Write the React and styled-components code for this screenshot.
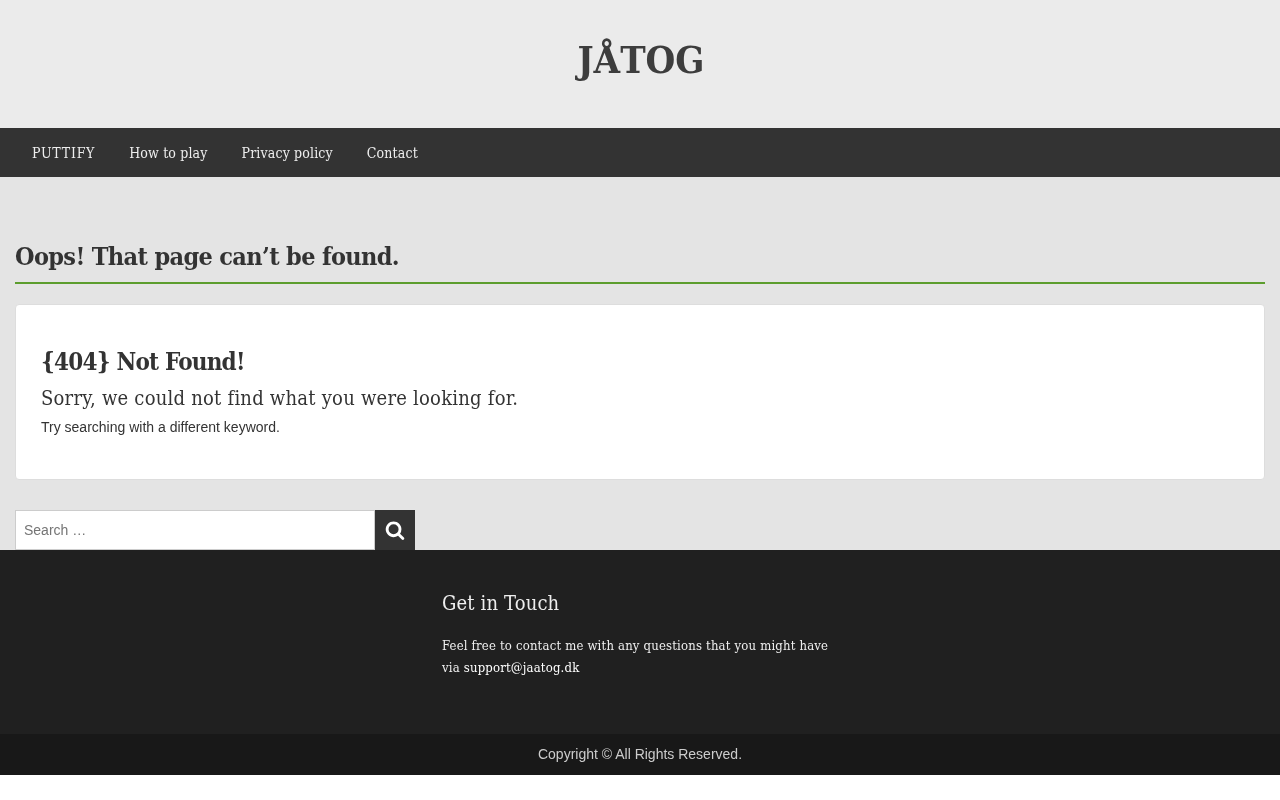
import React from "react";
import styled, { createGlobalStyle } from "styled-components";

const SLAB = `"DejaVu Serif Condensed", "DejaVu Serif", serif`;

const GlobalStyle = createGlobalStyle`
  body {
    margin: 0;
    background: #fff;
    font-family: "Liberation Sans", Arial, sans-serif;
    font-size: 14px;
    color: #333;
  }

  /* greyscale text like the reference */
  #root {
    will-change: transform;
  }
`;

// FontAwesome 4 style magnifier, same shape as the reference button
const SearchIcon = () => (
  <svg width="20" height="20" viewBox="0 0 1792 1792" fill="currentColor">
    <path d="M1216 832q0-185-131.500-316.500t-316.500-131.500-316.500 131.500-131.500 316.500 131.500 316.500 316.500 131.500 316.500-131.500 131.500-316.500zm512 832q0 52-38 90t-90 38q-54 0-90-38l-343-342q-179 124-399 124-143 0-273.500-55.500t-225-150-150-225-55.500-273.500 55.500-273.500 150-225 225-150 273.500-55.500 273.500 55.500 225 150 150 225 55.500 273.500q0 220-124 399l343 343q37 37 37 90z" />
  </svg>
);

const App = () => {
  return (
    <>
      <GlobalStyle />
      <Header>
        <SiteTitle>JÅTOG</SiteTitle>
      </Header>
      <Nav>
        <NavLink href="#" $spacing="0.75px">PUTTIFY</NavLink>
        <NavLink href="#">How to play</NavLink>
        <NavLink href="#">Privacy policy</NavLink>
        <NavLink href="#">Contact</NavLink>
      </Nav>
      <Main>
        <PageTitle>Oops! That page can’t be found.</PageTitle>
        <Card>
          <CardTitle>{"{404} Not Found!"}</CardTitle>
          <CardSub>Sorry, we could not find what you were looking for.</CardSub>
          <CardText>Try searching with a different keyword.</CardText>
        </Card>
        <SearchForm>
          <SearchInput placeholder="Search …" />
          <SearchButton type="button" aria-label="Search">
            <SearchIcon />
          </SearchButton>
        </SearchForm>
      </Main>
      <Footer>
        <FooterColumn>
          <FooterTitle>Get in Touch</FooterTitle>
          <FooterText>
            Feel free to contact me with any questions that you might have via{" "}
            <FooterLink href="#">support@jaatog.dk</FooterLink>
          </FooterText>
        </FooterColumn>
      </Footer>
      <Copyright>Copyright © All Rights Reserved.</Copyright>
    </>
  );
};

const Header = styled.header`
  height: 128px;
  background: #ebebeb;
  display: flex;
  align-items: center;
  justify-content: center;
`;

const SiteTitle = styled.h1`
  margin: 0 0 8px 2px;
  font-family: ${SLAB};
  font-size: 38px;
  font-weight: 700;
  line-height: 1;
  color: #3d3d3d;
`;

const Nav = styled.nav`
  height: 49px;
  background: #333;
  display: flex;
  align-items: center;
  padding: 0 15px;
`;

const NavLink = styled.a`
  padding: 0 17px;
  font-family: ${SLAB};
  font-size: 14px;
  letter-spacing: ${(props) => props.$spacing || "0.15px"};
  color: #eee;
  text-decoration: none;
`;

const Main = styled.main`
  height: 373px;
  box-sizing: border-box;
  background: #e4e4e4;
  padding: 60px 15px 0;
`;

const PageTitle = styled.h2`
  margin: 0 0 20px;
  height: 47px;
  box-sizing: border-box;
  border-bottom: 2px solid #5c9d2e;
  padding-top: 4px;
  font-family: ${SLAB};
  font-size: 25px;
  font-weight: 700;
  letter-spacing: -0.65px;
  line-height: 32px;
  color: #333;
`;

const Card = styled.section`
  height: 176px;
  box-sizing: border-box;
  background: #fff;
  border: 1px solid #ddd;
  border-radius: 4px;
  padding: 41px 25px 0;
`;

const CardTitle = styled.h3`
  margin: 0;
  font-family: ${SLAB};
  font-size: 24px;
  font-weight: 700;
  letter-spacing: -0.8px;
  line-height: 32px;
  color: #333;
`;

const CardSub = styled.h4`
  margin: 5px 0 0;
  font-family: ${SLAB};
  font-size: 20px;
  font-weight: 400;
  letter-spacing: 0.23px;
  line-height: 30px;
  color: #333;
`;

const CardText = styled.p`
  margin: 4px 0 0;
  font-size: 14px;
  line-height: 20px;
  color: #333;
`;

const SearchForm = styled.form`
  display: flex;
  margin-top: 30px;
  width: 400px;
  height: 40px;
`;

const SearchInput = styled.input`
  flex: 1;
  min-width: 0;
  box-sizing: border-box;
  border: 1px solid #ccc;
  background: #fff;
  padding: 0 8px;
  font-family: "Liberation Sans", Arial, sans-serif;
  font-size: 14px;
  outline: none;

  &::placeholder {
    color: #757575;
    opacity: 1;
  }
`;

const SearchButton = styled.button`
  width: 40px;
  height: 40px;
  border: 0;
  padding: 0;
  background: #333;
  color: #fff;
  display: flex;
  align-items: center;
  justify-content: center;
`;

const Footer = styled.footer`
  height: 184px;
  box-sizing: border-box;
  background: #202020;
  padding: 35px 0 0 442px;
`;

const FooterColumn = styled.div`
  width: 396px;
`;

const FooterTitle = styled.h4`
  margin: 0;
  font-family: ${SLAB};
  font-size: 20px;
  font-weight: 400;
  letter-spacing: 0.15px;
  line-height: 36px;
  color: #eee;
`;

const FooterText = styled.p`
  margin: 14px 0 0;
  font-family: ${SLAB};
  font-size: 13px;
  letter-spacing: 0.18px;
  line-height: 22px;
  color: #eee;
`;

const FooterLink = styled.a`
  color: #fff;
  text-decoration: none;
`;

const Copyright = styled.div`
  height: 41px;
  padding-bottom: 2px;
  box-sizing: border-box;
  background: #181818;
  color: #ccc;
  font-size: 14px;
  display: flex;
  align-items: center;
  justify-content: center;
`;

export default App;
